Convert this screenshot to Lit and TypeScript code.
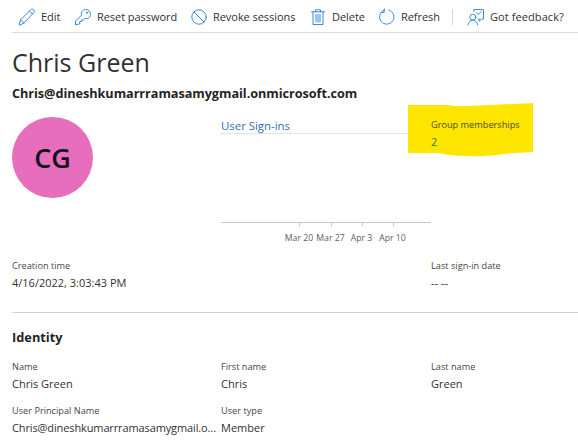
import { LitElement, html, css, svg } from "lit";
import { customElement } from "lit/decorators.js";

const icon = (body: unknown) => html`<svg class="ic" width="18" height="18" viewBox="0 0 18 18" fill="none" stroke="#3a8ad0" stroke-width="1" stroke-linejoin="round" stroke-linecap="round">${body}</svg>`;

const icons = {
  edit: svg`<path d="M1.200 16.800l1.300-4.900L12.700 1.700c.8-.8 2.200-.8 3 .1.800.8.800 2.100 0 2.900L5.900 15z"/><path d="M2.500 11.900l3.400 3.100M11.400 3l3.200 3.200"/>`,
  key: svg`<path d="M1.500 16.500v-3.300l6-6c-.9-2.900 1.200-5.700 4.200-5.700 2.600 0 4.800 2.100 4.800 4.800 0 3-2.800 5.100-5.700 4.200l-1.600 1.600H7.500v1.500H5.700v1.900z"/><path d="M12.800 4.300h.9v.9h-.9z"/>`,
  block: svg`<circle cx="9" cy="9" r="7.200"/><path d="M3.900 3.900l10.200 10.200"/>`,
  trash: svg`<path d="M2.500 3.800h13M6.500 3.800V1.800h5v2M4 3.800V16.500h10V3.800"/><path d="M7 6.500v7.500M9 6.500v7.500M11 6.500v7.500"/>`,
  refresh: svg`<path d="M10.800 2a7.200 7.200 0 1 1-4.700.200"/><path d="M6.300 1l-.2 3.600-3.300-.3"/>`,
  feedback: svg`<path d="M6.800 3.500V1.600h9.700v9.400h-2l-2.300 2.400V11H11"/><path d="M9.500 4.800l1.700 1.700 3-3"/><circle cx="5.800" cy="9.200" r="3"/><path d="M1 16.800c.3-2.600 2.300-4.600 4.800-4.600s4.500 2 4.800 4.600"/>`,
};

@customElement("app-root")
export class AppRoot extends LitElement {
  static styles = css`
    :host {
      display: block;
      width: 578px;
      height: 443px;
      overflow: hidden;
      background: #fff;
      font-family: "Open Sans", "Noto Sans", sans-serif;
      color: #323130;
      position: relative;
    }
    .toolbar {
      display: flex;
      align-items: center;
      height: 33px;
      margin-left: 12px;
      padding: 1px 0 0 6px;
      box-sizing: border-box;
      border-bottom: 1px solid #dcdcdc;
      font-size: 11px;
      letter-spacing: -0.05px;
      white-space: nowrap;
    }
    .tool { display: flex; align-items: center; gap: 5px; }
    .ic { flex: none; display: block; }
    .t1 { width: 56px; }
    .t2 { width: 116px; }
    .t3 { width: 119px; }
    .t4 { width: 69px; }
    .t5 { width: 74px; }
    .t6 { letter-spacing: 0.08px; }
    .sep { width: 1px; height: 16px; background: #d8d8d8; margin: 0 14px 0 0; }
    h1 {
      margin: 12px 0 0 12px;
      font-size: 25px;
      line-height: 34px;
      font-weight: 400;
    }
    .email {
      margin: 5px 0 0 12px;
      font-size: 12.7px;
      line-height: 18px;
      font-weight: 700;
      letter-spacing: -0.05px;
      color: #252423;
    }
    .summary {
      display: grid;
      grid-template-columns: 209px 210px 1fr;
      margin: 0 0 0 12px;
      height: 154px;
    }
    .avatar {
      width: 81px;
      height: 81px;
      margin-top: 15px;
      border-radius: 50%;
      background: #e76ebd;
      color: #14101e;
      display: flex;
      align-items: center;
      justify-content: center;
      font-size: 27px;
      font-weight: 600;
    }
    .chart { position: relative; padding-top: 15px; }
    .chart-title {
      color: #2f6fb5;
      font-size: 11.400px;
      line-height: 17px;
      height: 16px;
      border-bottom: 1px solid #e3e3e3;
      width: 260px;
    }
    .plot {
      height: 88px;
      border-bottom: 1px solid #c8c8c8;
    }
    .ticks {
      display: grid;
      grid-template-columns: 62px 32px 31px 31px 31px;
      font-size: 8.700px;
      color: #605e5c;
      line-height: 12px;
      height: 20px;
    }
    .tick {
      position: relative;
      padding-top: 9px;
      white-space: nowrap;
      display: flex;
      justify-content: center;
    }
    .tick::before {
      content: "";
      position: absolute;
      top: 0;
      left: 50%;
      width: 1px;
      height: 3px;
      background: #c8c8c8;
    }
    .group { position: relative; padding-top: 16px; }
    .blob { position: absolute; left: -23px; top: 1px; }
    .group .field { position: relative; }
    .green { color: #1f8a1f; }
    .fields {
      display: grid;
      grid-template-columns: 209px 210px 1fr;
      margin-left: 12px;
    }
    .field { min-width: 0; }
    .label {
      font-size: 9.200px;
      line-height: 13px;
      color: #484644;
      white-space: nowrap;
    }
    .value {
      font-size: 11px;
      line-height: 17px;
      margin-top: 2px;
      white-space: nowrap;
    }
    .upn { letter-spacing: -0.12px; }
    .created { height: 53px; margin-top: 3px; }
    .divider { height: 1px; background: #d2d2d2; margin-left: 12px; }
    h2 {
      margin: 15px 0 13px 12px;
      font-size: 12.800px;
      line-height: 19px;
      font-weight: 700;
      color: #252423;
    }
    .row-gap { row-gap: 12px; }
  `;

  render() {
    return html`
      <div class="toolbar">
        <div class="tool t1">${icon(icons.edit)}<span>Edit</span></div>
        <div class="tool t2">${icon(icons.key)}<span>Reset password</span></div>
        <div class="tool t3">${icon(icons.block)}<span>Revoke sessions</span></div>
        <div class="tool t4">${icon(icons.trash)}<span>Delete</span></div>
        <div class="tool t5">${icon(icons.refresh)}<span>Refresh</span></div>
        <div class="sep"></div>
        <div class="tool t6">${icon(icons.feedback)}<span>Got feedback?</span></div>
      </div>
      <h1>Chris Green</h1>
      <div class="email">Chris@dineshkumarrramasamygmail.onmicrosoft.com</div>
      <div class="summary">
        <div><div class="avatar">CG</div></div>
        <div class="chart">
          <div class="chart-title">User Sign-ins</div>
          <div class="plot"></div>
          <div class="ticks">
            <span></span>
            <div class="tick"><span>Mar 20</span></div>
            <div class="tick"><span>Mar 27</span></div>
            <div class="tick"><span>Apr 3</span></div>
            <div class="tick"><span>Apr 10</span></div>
          </div>
        </div>
        <div class="group">
          <svg class="blob" width="126" height="54" viewBox="0 0 126 54"><path fill="#ffe600" d="M0 2 L40 2 Q50 4 60 3 L125 0 L125 49 Q100 50 78 53 Q50 54 30 50 L0 50 Z"/></svg>
          <div class="field">
            <div class="label">Group memberships</div>
            <div class="value green">2</div>
          </div>
        </div>
      </div>
      <div class="fields created">
        <div class="field"><div class="label">Creation time</div><div class="value">4/16/2022, 3:03:43 PM</div></div>
        <div class="field"></div>
        <div class="field"><div class="label">Last sign-in date</div><div class="value">-- --</div></div>
      </div>
      <div class="divider"></div>
      <h2>Identity</h2>
      <div class="fields row-gap">
        <div class="field"><div class="label">Name</div><div class="value">Chris Green</div></div>
        <div class="field"><div class="label">First name</div><div class="value">Chris</div></div>
        <div class="field"><div class="label">Last name</div><div class="value">Green</div></div>
        <div class="field"><div class="label">User Principal Name</div><div class="value upn">Chris@dineshkumarrramasamygmail.o...</div></div>
        <div class="field"><div class="label">User type</div><div class="value">Member</div></div>
      </div>
    `;
  }
}
